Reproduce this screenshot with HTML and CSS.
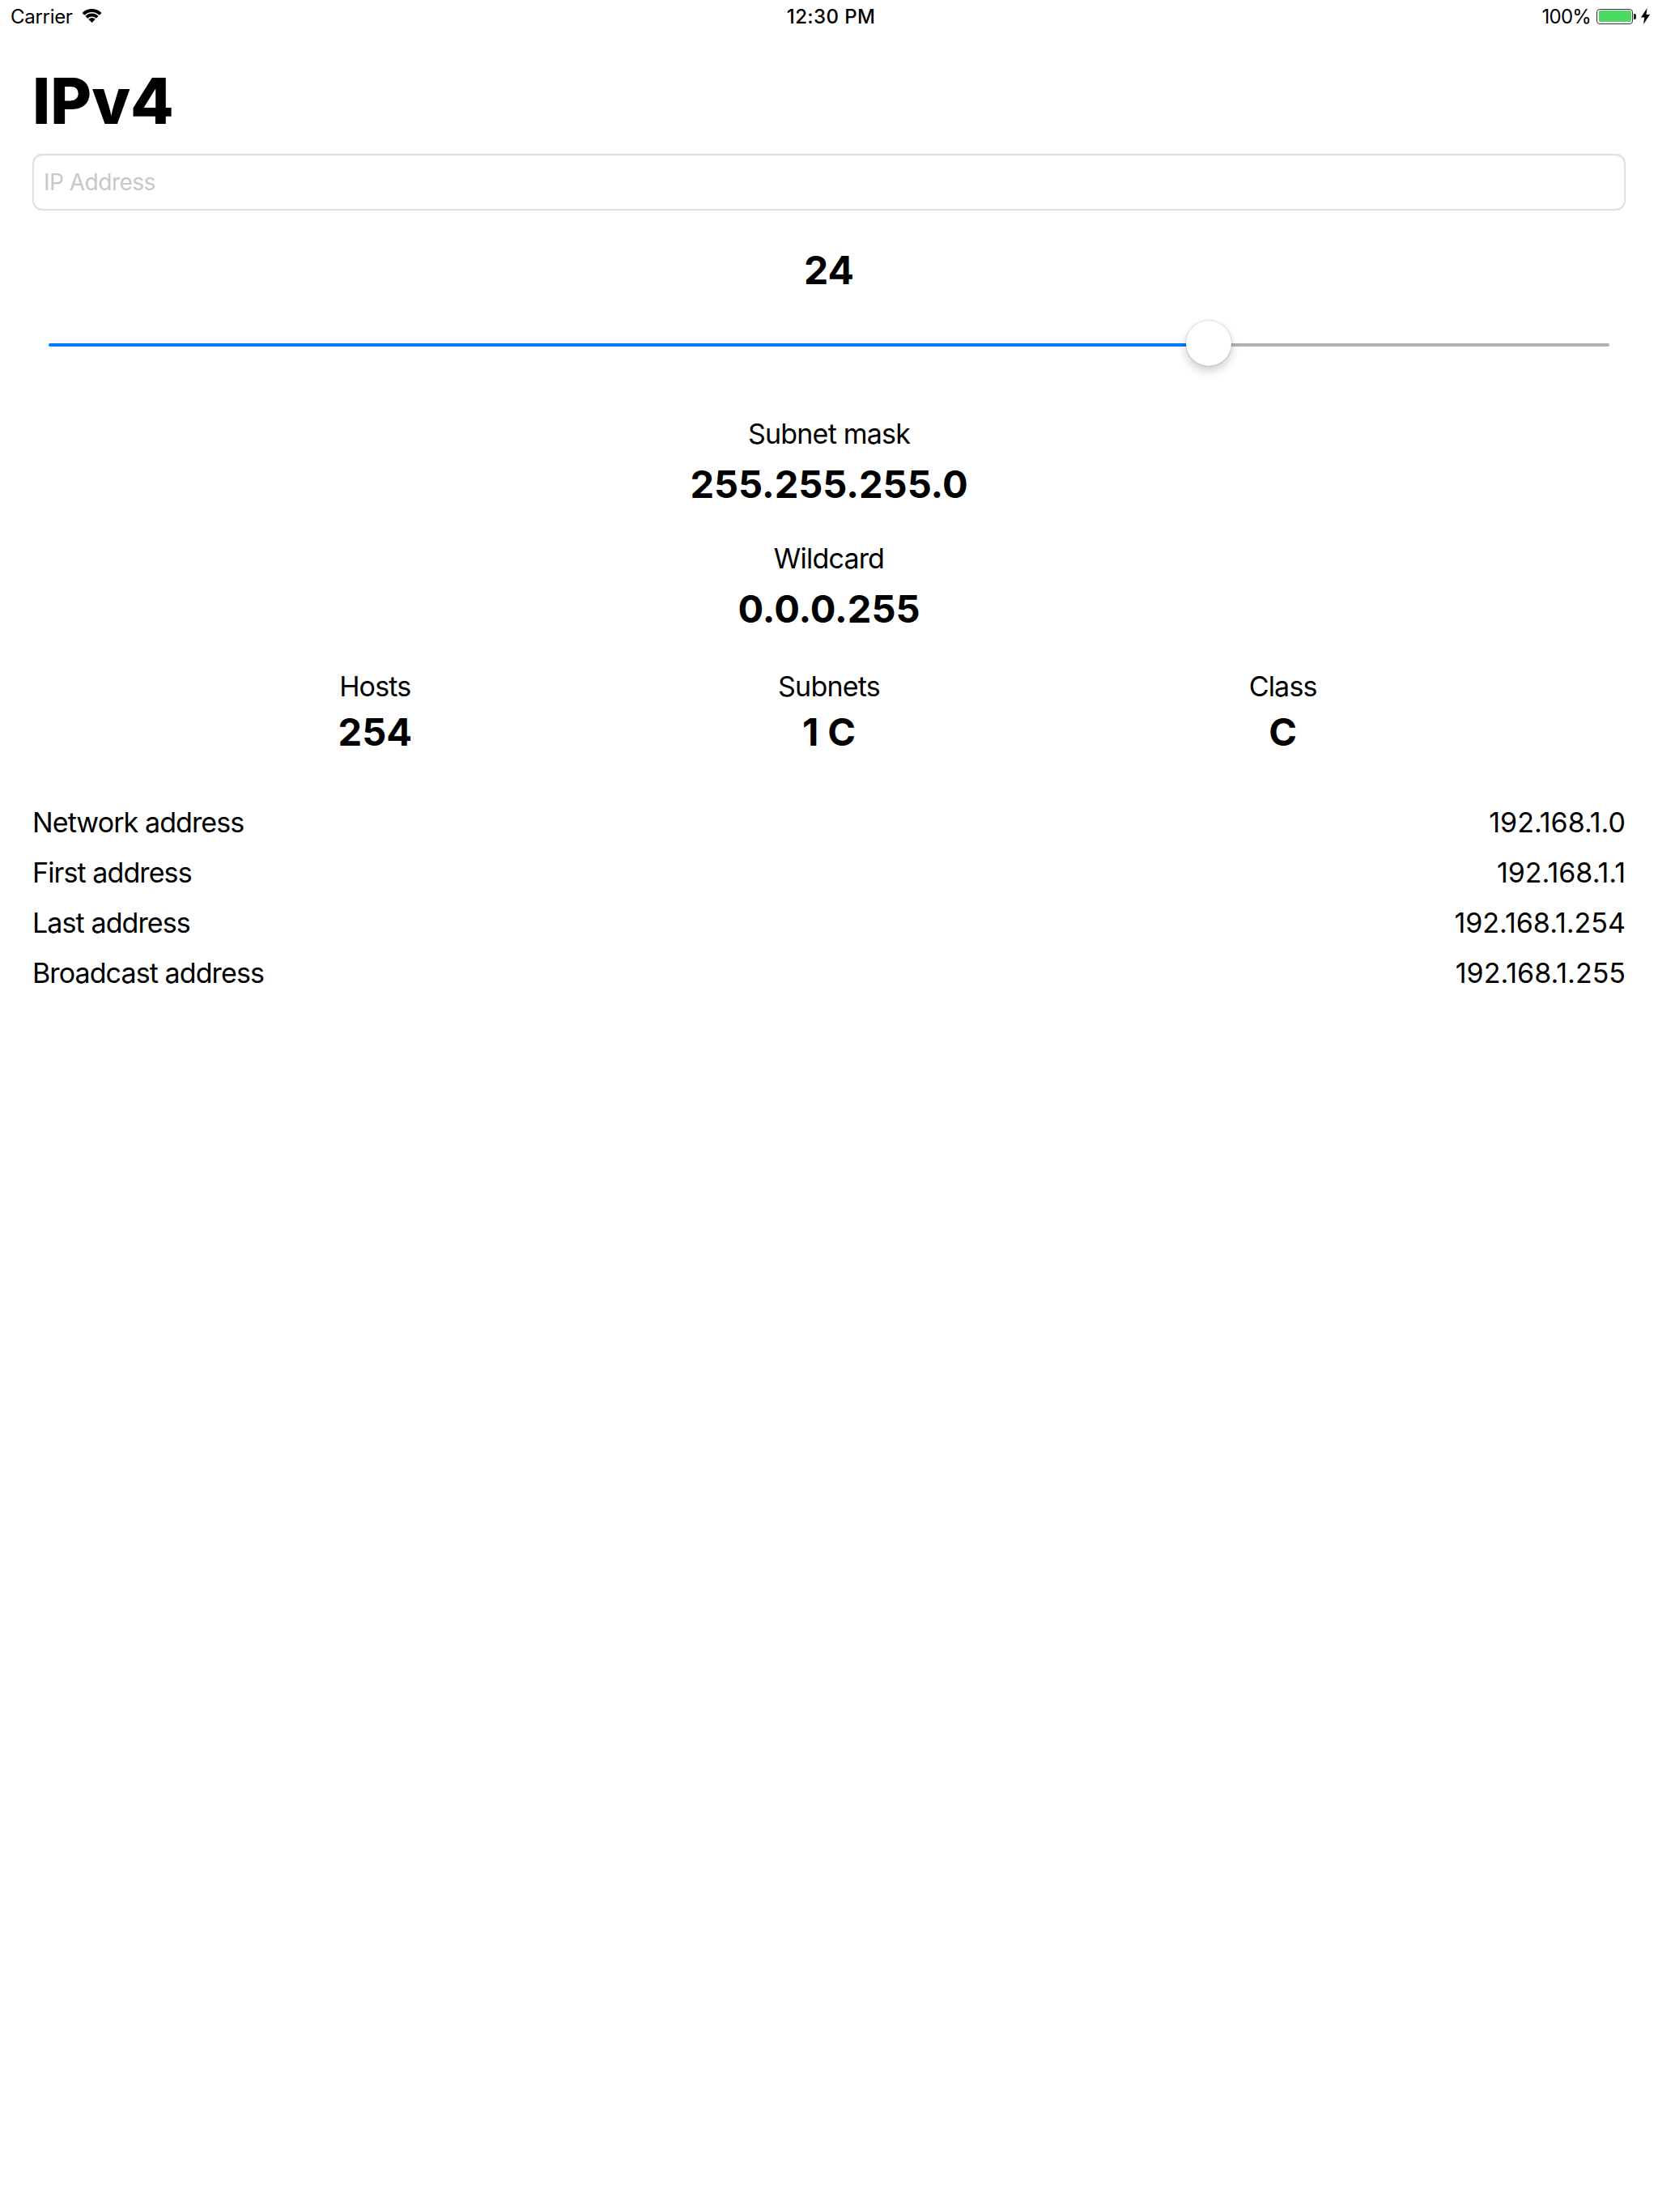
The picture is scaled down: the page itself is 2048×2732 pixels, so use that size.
FILE: index.html
```html
<!DOCTYPE html>
<html lang="en">
<head>
<meta charset="utf-8">
<title>IPv4</title>
<link rel="stylesheet" href="styles.css">
</head>
<body>
<header class="status">
  <div class="status-left">
    <span class="carrier">Carrier</span>
    <svg class="wifi" viewBox="0 0 25 18" width="25" height="18"><path d="M12.500 17 8.260 12.760A6 6 0 0 1 16.740 12.760Z"/><path d="M7.200 11.700 4.370 8.870A11.500 11.500 0 0 1 20.630 8.870L17.800 11.700A7.500 7.500 0 0 0 7.200 11.700Z"/><path d="M3.310 7.810 0.480 4.980A17 17 0 0 1 24.520 4.980L21.690 7.810A13 13 0 0 0 3.310 7.810Z"/></svg>
  </div>
  <div class="status-time">12:30 PM</div>
  <div class="status-right">
    <span class="percent">100%</span>
    <span class="battery"><span class="battery-fill"></span></span>
    <span class="battery-tip"></span>
    <svg class="bolt" viewBox="0 0 11 20" width="11" height="20"><path d="M7.500 0 0 11.500h4.300L3 20 11 8H6.500Z"/></svg>
  </div>
</header>
<main class="page">
  <h1 class="title">IPv4</h1>
  <div class="field"><span class="placeholder">IP Address</span></div>
  <div class="prefix">24</div>
  <div class="slider">
    <div class="track track-on"></div>
    <div class="track track-off"></div>
    <div class="thumb"></div>
  </div>
  <section class="stat first-stat">
    <div class="label">Subnet mask</div>
    <div class="value big">255.255.255.0</div>
  </section>
  <section class="stat second-stat">
    <div class="label">Wildcard</div>
    <div class="value big">0.0.0.255</div>
  </section>
  <section class="triple">
    <div class="stat"><div class="label">Hosts</div><div class="value">254</div></div>
    <div class="stat"><div class="label">Subnets</div><div class="value">1 C</div></div>
    <div class="stat"><div class="label">Class</div><div class="value">C</div></div>
  </section>
  <section class="rows">
    <div class="row"><span class="key">Network address</span><span>192.168.1.0</span></div>
    <div class="row"><span class="key">First address</span><span>192.168.1.1</span></div>
    <div class="row"><span class="key">Last address</span><span>192.168.1.254</span></div>
    <div class="row"><span class="key">Broadcast address</span><span>192.168.1.255</span></div>
  </section>
</main>
</body>
</html>
```
FILE: styles.css
```css
* { box-sizing: border-box; }
html, body { margin: 0; padding: 0; background: #fff; }
body { width: 2048px; height: 2732px; overflow: hidden; font-family: Inter, "Liberation Sans", sans-serif; color: #000; }

.status { height: 40px; display: grid; grid-template-columns: 1fr auto 1fr; align-items: center; padding: 0 10px 0 13px; font-size: 24px; color: #000; }
.status-left { display: flex; align-items: center; gap: 11px; }
.carrier { letter-spacing: -0.3px; }
.status-time { margin-left: 2px; font-weight: 500; font-size: 24px; letter-spacing: 0.4px; }
.status-right { display: flex; align-items: center; justify-content: flex-end; }
.percent { letter-spacing: -0.8px; }
.battery { width: 45px; height: 19px; margin-left: 7px; border: 1.5px solid #333; border-radius: 4px; padding: 1.5px; display: flex; }
.battery-fill { flex: 1; background: #4cd964; border-radius: 2px; }
.battery-tip { width: 3px; height: 7px; background: #222; margin: 0 6px 0 1px; border-radius: 0 2px 2px 0; }
.wifi, .bolt { fill: #000; display: block; }

.page { padding: 0 40px; }
.title { margin: 40px 0 0; font-size: 78px; line-height: 90px; font-weight: 800; }
.field { margin-top: 20px; height: 70px; border: 2px solid #dfdfe2; border-radius: 12px; padding: 0 12px; display: flex; align-items: center; }
.placeholder { font-size: 28px; letter-spacing: -0.5px; color: #c7c7cd; }
.prefix { margin-top: 44px; text-align: center; font-size: 48px; line-height: 60px; font-weight: 700; }

.slider { position: relative; height: 60px; margin: 32px 20px 0; display: flex; align-items: center; }
.track { height: 4px; border-radius: 2px; }
.track-on { width: 1432px; background: #007aff; }
.track-off { flex: 1; background: #b1b1b1; }
.thumb { position: absolute; left: 1405px; top: 0; width: 56px; height: 56px; border-radius: 50%; background: #fff; box-shadow: 0 0 2px rgba(0,0,0,.3), 0 6px 12px rgba(0,0,0,.2); }

.stat { text-align: center; }
.label { font-size: 34px; line-height: 42px; letter-spacing: -0.8px; }
.value { margin-top: 6px; font-size: 47px; line-height: 58px; font-weight: 700; }
.value.big { margin-top: 9px; line-height: 64px; }
.first-stat { margin-top: 59px; }
.second-stat { margin-top: 39px; }
.triple { display: grid; grid-template-columns: repeat(3, 1fr); margin-top: 43px; padding: 0 143px; }

.rows { margin-top: 52px; }
.row { display: flex; justify-content: space-between; font-size: 34px; line-height: 62px; }
.key { letter-spacing: -0.9px; }
```
